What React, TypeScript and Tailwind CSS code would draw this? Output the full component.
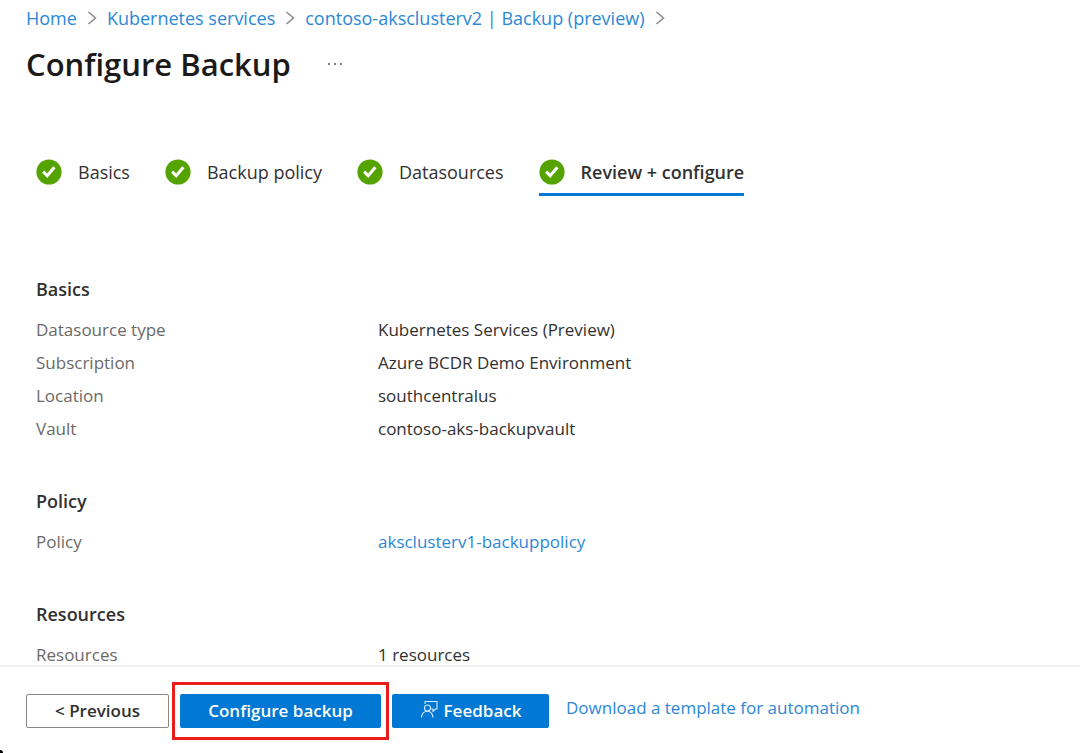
import { Fragment } from "react";

const crumbs = ["Home", "Kubernetes services", "contoso-aksclusterv2 | Backup (preview)"];

const steps = ["Basics", "Backup policy", "Datasources", "Review + configure"];

type Row = { label: string; value: string; link?: boolean };

const sections: { title: string; rows: Row[] }[] = [
  {
    title: "Basics",
    rows: [
      { label: "Datasource type", value: "Kubernetes Services (Preview)" },
      { label: "Subscription", value: "Azure BCDR Demo Environment" },
      { label: "Location", value: "southcentralus" },
      { label: "Vault", value: "contoso-aks-backupvault" },
    ],
  },
  { title: "Policy", rows: [{ label: "Policy", value: "aksclusterv1-backuppolicy", link: true }] },
  { title: "Resources", rows: [{ label: "Resources", value: "1 resources" }] },
];

function Chevron() {
  return (
    <svg width="10" height="16" viewBox="0 0 10 16" fill="none" stroke="#8a8a8a" strokeWidth="1.5" aria-hidden="true">
      <path d="M1.500 2 8.500 8l-7 6" />
    </svg>
  );
}

function CheckBadge() {
  return (
    <svg className="shrink-0" width="26" height="26" viewBox="0 0 26 26" aria-hidden="true">
      <circle cx="13" cy="13" r="12.6" fill="#54a300" />
      <path d="m7.200 12.600 4 4.200 7.200-8.600" fill="none" stroke="#fff" strokeWidth="3" />
    </svg>
  );
}

function FeedbackIcon() {
  return (
    <svg width="18" height="22" viewBox="0 0 18 22" fill="none" stroke="#d6e9fa" strokeWidth="1.1" aria-hidden="true">
      <path d="M5 4V1.500h12V9h-1.500L13 11.500V9h-2" />
      <circle cx="7.500" cy="8" r="3" />
      <path d="M1.500 17.500c.3-3.800 2.600-6.300 6-6.300s5 2.500 5.500 6.300" />
    </svg>
  );
}

export default function App() {
  return (
    <div className="relative flex h-screen flex-col overflow-hidden bg-white font-['Open_Sans','Noto_Sans',sans-serif] text-[17px] text-[#323130]">
      <header className="px-[26px] pt-1">
        <nav aria-label="Breadcrumb" className="flex items-center gap-[10px] text-lg leading-7 text-[#2b88d8]">
          {crumbs.map((c) => (
            <Fragment key={c}>
              <a href="#" className="whitespace-nowrap">{c}</a>
              <Chevron />
            </Fragment>
          ))}
        </nav>
        <div className="mt-2 flex items-center gap-9">
          <h1 className="text-[31px] leading-12 font-semibold text-[#1b1a19]">Configure Backup</h1>
          <button type="button" aria-label="More options">
            <svg width="16" height="4" viewBox="0 0 16 4" fill="#605e5c" aria-hidden="true">
              <circle cx="2" cy="2" r="1.100" />
              <circle cx="8" cy="2" r="1.100" />
              <circle cx="14" cy="2" r="1.100" />
            </svg>
          </button>
        </div>
      </header>

      <main className="min-h-0 flex-1 overflow-hidden px-9 pt-[68px]">
        <div role="tablist" className="flex items-start gap-[35px]">
          {steps.map((s, i) => {
            const active = i === steps.length - 1;
            return (
              <button
                key={s}
                type="button"
                role="tab"
                aria-selected={active}
                className={`flex items-center gap-4 border-b-3 pb-[5px] text-lg leading-8 whitespace-nowrap ${
                  active ? "border-[#0078d4] font-semibold" : "border-transparent"
                }`}
              >
                <CheckBadge />
                {s}
              </button>
            );
          })}
        </div>

        <div className="mt-[75px] flex flex-col gap-[38px]">
          {sections.map((sec) => (
            <section key={sec.title}>
              <h2 className="text-lg leading-9 font-semibold">{sec.title}</h2>
              <dl className="mt-[6px]">
                {sec.rows.map((r) => (
                  <div key={r.label} className="grid grid-cols-[342px_1fr] leading-[33px]">
                    <dt className="text-[#6b6967]">{r.label}</dt>
                    <dd>
                      {r.link ? <a href="#" className="text-[#2b88d8]">{r.value}</a> : r.value}
                    </dd>
                  </div>
                ))}
              </dl>
            </section>
          ))}
        </div>
      </main>

      <footer className="flex items-start gap-[11px] border-t-2 border-[#efefef] px-[26px] pt-[27px] pb-[25px]">
        <button type="button" className="h-[34px] w-[143px] rounded-xs border border-[#8a8886] font-semibold">
          &lt; Previous
        </button>
        <div className="relative">
          <button type="button" className="h-[34px] w-[201px] rounded-xs bg-[#0078d4] font-semibold text-white">
            Configure backup
          </button>
          <span className="pointer-events-none absolute -inset-x-2 -inset-y-3 border-3 border-[#ea1c1c]" />
        </div>
        <button
          type="button"
          className="flex h-[34px] w-[157px] items-center justify-center gap-[6px] rounded-xs bg-[#0078d4] font-semibold text-white"
        >
          <FeedbackIcon />
          Feedback
        </button>
        <a href="#" className="ml-[6px] leading-7 text-[#2b88d8]">
          Download a template for automation
        </a>
      </footer>
      <span className="absolute bottom-0 left-0 h-[3px] w-[3px] rounded-tr-full bg-black" />
    </div>
  );
}
